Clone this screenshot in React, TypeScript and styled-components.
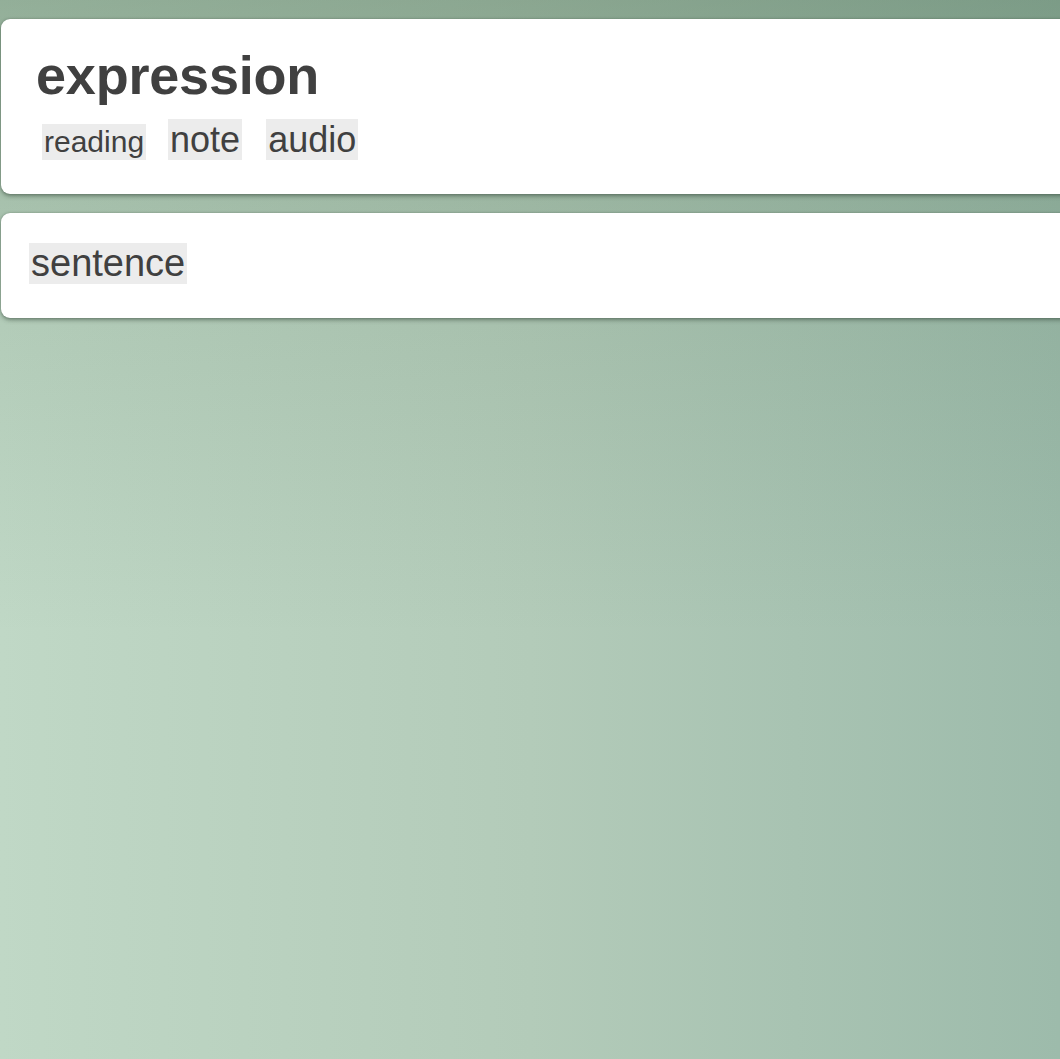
import React from "react";
import styled, { createGlobalStyle } from "styled-components";

const GlobalStyle = createGlobalStyle`
  html, body {
    margin: 0;
    padding: 0;
    height: 100%;
    overflow: hidden;
  }
  body {
    font-family: "Liberation Sans", Arial, Helvetica, sans-serif;
    color: #404040;
  }
  #root {
    min-height: 100%;
  }
`;

const Page = styled.div`
  min-height: 1059px;
  box-sizing: border-box;
  padding: 19px 0 0 1px;
  display: flex;
  flex-direction: column;
  gap: 19px;
  background:
    linear-gradient(
      to bottom,
      rgba(60, 95, 65, 0.34) 0%,
      rgba(60, 95, 65, 0.1) 30%,
      rgba(60, 95, 65, 0) 60%
    ),
    linear-gradient(to right, #c0d8c6 0%, #b3cbb9 50%, #9dbbab 100%);
`;

const Card = styled.section<{ $pad: string }>`
  width: 1100px;
  box-sizing: border-box;
  background: #ffffff;
  border-radius: 9px;
  box-shadow: 0 2px 4px rgba(40, 60, 45, 0.5), 0 0 2px rgba(40, 60, 45, 0.25);
  padding: ${(p) => p.$pad};
  display: flex;
  flex-direction: column;
  align-items: flex-start;
`;

const Title = styled.h1`
  margin: 0;
  font-size: 54px;
  line-height: 62px;
  font-weight: 700;
  color: #404040;
  letter-spacing: -0.2px;
`;

const TagRow = styled.div`
  display: flex;
  align-items: flex-end;
  margin: 13px 0 0 6px;
`;

const Tag = styled.span<{ $size: number; $height: number; $gap: number; $padX?: number }>`
  display: inline-block;
  background: #ececec;
  color: #404040;
  font-size: ${(p) => p.$size}px;
  line-height: ${(p) => p.$height}px;
  height: ${(p) => p.$height}px;
  padding: 0 ${(p) => p.$padX ?? 2}px;
  margin-left: ${(p) => p.$gap}px;
  white-space: nowrap;
`;

export default function App() {
  return (
    <>
      <GlobalStyle />
      <Page>
        <Card $pad="25px 0 34px 35px">
          <Title>expression</Title>
          <TagRow>
            <Tag $size={30} $height={36} $gap={0}>
              reading
            </Tag>
            <Tag $size={36} $height={41} $gap={22}>
              note
            </Tag>
            <Tag $size={36} $height={41} $gap={24}>
              audio
            </Tag>
          </TagRow>
        </Card>
        <Card $pad="30px 0 34px 28px">
          <Tag $size={38} $height={41} $gap={0}>
            sentence
          </Tag>
        </Card>
      </Page>
    </>
  );
}
